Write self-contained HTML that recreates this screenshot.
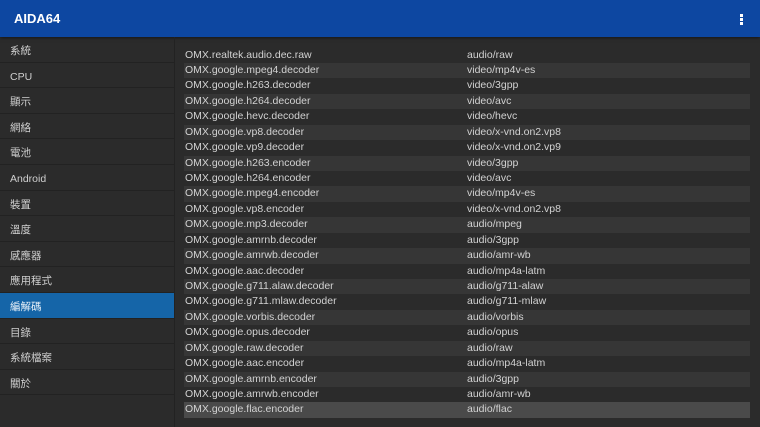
<!DOCTYPE html>
<html><head><meta charset="utf-8"><style>
*{margin:0;padding:0;box-sizing:border-box}
body{width:760px;height:427px;overflow:hidden;background:#2b2b2b;font-family:"Liberation Sans","Noto Sans CJK TC",sans-serif;position:relative}
.hdr{position:absolute;left:0;top:0;width:760px;height:37px;background:#0d47a1;box-shadow:0 1px 3px rgba(0,0,0,.5)}
.hdr .t{position:absolute;left:14px;top:11px;color:#fff;font-size:13px;font-weight:bold}
.dot{position:absolute;left:740px;width:3px;height:3px;background:#fff}
.side{position:absolute;left:0;top:37px;width:175px;height:390px;border-right:1px solid #222}
.it{height:25.6px;border-bottom:1.5px solid #222;color:#d0d0d0;font-size:10.5px;padding-left:10px;line-height:29px;overflow:hidden}
.it.sel{background:#1565a8;color:#e8f0f8}
.row{position:absolute;left:184px;width:566px;height:15.43px;font-size:10.5px;color:#d2d2d2;line-height:15.4px}
.row.a{background:#363636}
.row.h{background:#4a4a4a}
.row span{position:absolute;left:1px}
.row span+span{left:283px}
</style></head><body>
<div class="hdr"><div class="t">AIDA64</div><div class="dot" style="top:14px"></div><div class="dot" style="top:18px"></div><div class="dot" style="top:22px"></div></div>
<div class="side">
<div class="it">系統</div><div class="it">CPU</div><div class="it">顯示</div><div class="it">網絡</div><div class="it">電池</div><div class="it">Android</div><div class="it">裝置</div><div class="it">溫度</div><div class="it">感應器</div><div class="it">應用程式</div><div class="it sel">編解碼</div><div class="it">目錄</div><div class="it">系統檔案</div><div class="it">關於</div>
</div>
<div id="t"></div>
<script>
var d=[["OMX.realtek.audio.dec.raw","audio/raw"],["OMX.google.mpeg4.decoder","video/mp4v-es"],["OMX.google.h263.decoder","video/3gpp"],["OMX.google.h264.decoder","video/avc"],["OMX.google.hevc.decoder","video/hevc"],["OMX.google.vp8.decoder","video/x-vnd.on2.vp8"],["OMX.google.vp9.decoder","video/x-vnd.on2.vp9"],["OMX.google.h263.encoder","video/3gpp"],["OMX.google.h264.encoder","video/avc"],["OMX.google.mpeg4.encoder","video/mp4v-es"],["OMX.google.vp8.encoder","video/x-vnd.on2.vp8"],["OMX.google.mp3.decoder","audio/mpeg"],["OMX.google.amrnb.decoder","audio/3gpp"],["OMX.google.amrwb.decoder","audio/amr-wb"],["OMX.google.aac.decoder","audio/mp4a-latm"],["OMX.google.g711.alaw.decoder","audio/g711-alaw"],["OMX.google.g711.mlaw.decoder","audio/g711-mlaw"],["OMX.google.vorbis.decoder","audio/vorbis"],["OMX.google.opus.decoder","audio/opus"],["OMX.google.raw.decoder","audio/raw"],["OMX.google.aac.encoder","audio/mp4a-latm"],["OMX.google.amrnb.encoder","audio/3gpp"],["OMX.google.amrwb.encoder","audio/amr-wb"],["OMX.google.flac.encoder","audio/flac"]];
var h="";d.forEach(function(r,i){var c=i==23?"row h":(i%2?"row a":"row");h+='<div class="'+c+'" style="top:'+(47.5+i*15.43)+'px"><span>'+r[0]+'</span><span>'+r[1]+'</span></div>';});
document.getElementById("t").innerHTML=h;
</script>
</body></html>
